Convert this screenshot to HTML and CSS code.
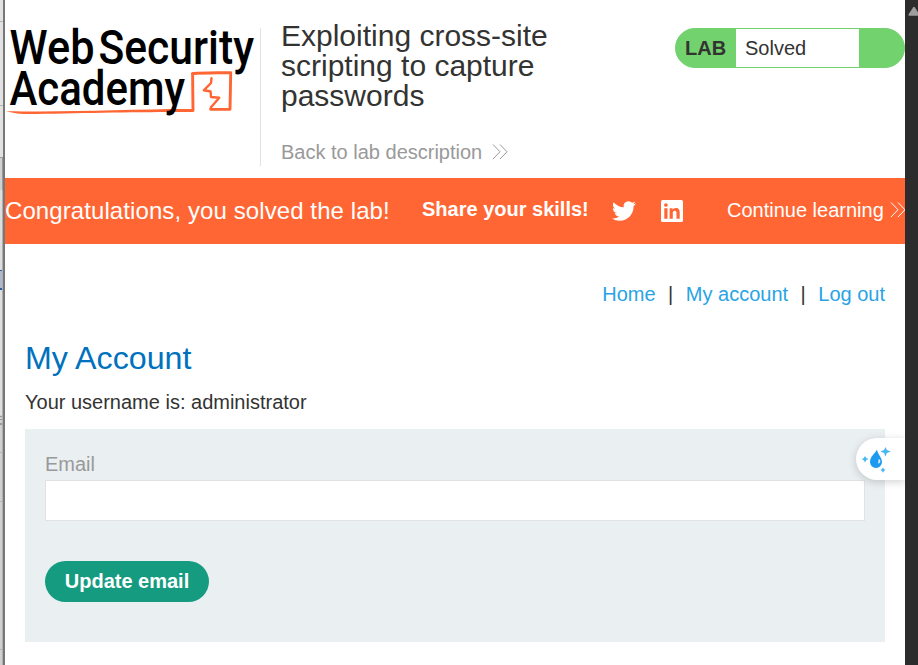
FILE: index.html
```html
<!DOCTYPE html>
<html lang="en">
<head>
<meta charset="utf-8">
<title>Exploiting cross-site scripting to capture passwords</title>
<link rel="stylesheet" href="styles.css">
</head>
<body>
<div class="window">
  <aside class="edge">
    <svg width="5" height="665" viewBox="0 0 5 665" shape-rendering="crispEdges">
      <path fill="#e2e2e2" d="M0 0h3v157H0z"/>
      <path fill="#d0d0d0" d="M0 157h3v508H0z"/>
      <path fill="#dedede" d="M0 190h2v225H0z"/>
      <path fill="#b4b4b4" d="M0 21h3v1H0zM0 105h3v1H0zM0 452h2v1H0zM0 501h2v1H0zM0 649h2v1H0z"/>
      <path fill="#999" d="M0 157h3v1H0zM2 157h1v265H2zM0 416h3v1H0zM0 419h3v1H0zM0 423h3v2H0z"/>
      <path fill="#adb9d1" d="M0 271h2v18H0z"/>
      <path fill="#2c5f9e" d="M0 270h2v1H0zM0 288h2v2H0z"/>
      <path fill="#777" d="M3 0h2v665H3z"/>
      <path fill="#b0aeae" d="M2 190h1v475H2z"/>
    </svg>
  </aside>
  <main class="page">
    <header class="lab-header">
      <a class="logo">
        <svg width="255" height="110" viewBox="5 10 255 110">
          <text class="logo-text" x="9.5" y="64.3" textLength="85" lengthAdjust="spacingAndGlyphs">Web</text>
          <text class="logo-text" x="98.5" y="64.3" textLength="155.5" lengthAdjust="spacingAndGlyphs">Security</text>
          <path fill="#ff6633" d="M6 111C14 111.400 24 111.600 40 111.400C90 111.400 140 108.900 193 109V112C150 111.500 80 113.200 28 114C17 113.800 10 112.600 6 111Z"/>
          <path fill="none" stroke="#ff6633" stroke-width="2.900" stroke-linejoin="round" stroke-linecap="round" d="M193 110.500L192.600 73.500M192.400 73.800C204 72.600 218 73 230.700 72.600L230.400 90L230 109.200L210.800 109.400"/>
          <path fill="none" stroke="#ff6633" stroke-width="2.400" stroke-linejoin="round" stroke-linecap="round" d="M210.800 109V107.500L219.300 97.800L211 97L210.600 91.500L203.800 90.300L211 83L211.500 78.200"/>
          <text class="logo-text" x="9.500" y="105" textLength="175.500" lengthAdjust="spacingAndGlyphs">Academy</text>
        </svg>
      </a>
      <div class="title">
        <h2>Exploiting cross-site<br>scripting to capture<br>passwords</h2>
        <a class="back">Back to lab description
          <svg width="16" height="16" viewBox="0 0 16 16" fill="none" stroke="currentColor"><path d="M1 .5L8 7.750L1 15M8 .5L15 7.750L8 15"/></svg>
        </a>
      </div>
      <div class="status"><span class="status-label">LAB</span><span class="status-text">Solved</span></div>
    </header>
    <section class="banner">
      <h4>Congratulations, you solved the lab!</h4>
      <span class="share">Share your skills!</span>
      <svg class="twitter" width="24" height="24" viewBox="0 0 24 24" fill="#fff"><path d="M23.953 4.570a10 10 0 01-2.825.775 4.958 4.958 0 002.163-2.723c-.951.555-2.005.959-3.127 1.184a4.920 4.920 0 00-8.384 4.482C7.690 8.095 4.067 6.130 1.640 3.162a4.822 4.822 0 00-.666 2.475c0 1.710.870 3.213 2.188 4.096a4.904 4.904 0 01-2.228-.616v.060a4.923 4.923 0 003.946 4.827 4.996 4.996 0 01-2.212.085 4.936 4.936 0 004.604 3.417 9.867 9.867 0 01-6.102 2.105c-.390 0-.779-.023-1.170-.067a13.995 13.995 0 007.557 2.209c9.053 0 13.998-7.496 13.998-13.985 0-.210 0-.420-.015-.630A9.935 9.935 0 0024 4.590z"/></svg>
      <svg class="linkedin" width="22" height="22" viewBox="0 0 22 22"><rect width="22" height="22" rx="1.600" fill="#fff"/><path fill="#ff6633" d="M3.300 8.300h3.200v10.400H3.300zM8.600 8.300h3v1.450c.6-1 1.700-1.700 3.200-1.700 3.200 0 3.900 2.100 3.900 4.900v5.750h-3.200v-5.100c0-1.300-.1-2.800-1.750-2.800s-1.950 1.300-1.950 2.700v5.200H8.600z"/><circle cx="4.900" cy="5" r="1.850" fill="#ff6633"/></svg>
      <a class="continue">Continue learning <svg width="16" height="16" viewBox="0 0 16 16" fill="none" stroke="currentColor"><path d="M1 .5L8 7.750L1 15M8 .5L15 7.750L8 15"/></svg></a>
    </section>
    <div class="content">
      <nav class="links"><a>Home</a><span>|</span><a>My account</a><span>|</span><a>Log out</a></nav>
      <h1>My Account</h1>
      <p>Your username is: administrator</p>
      <form class="login-form">
        <label for="email">Email</label>
        <input id="email" type="email">
        <button type="button">Update email</button>
      </form>
    </div>
    <div class="assistant">
      <svg width="29" height="27" viewBox="0 0 29 27">
        <path fill="#1c9bf0" d="M15 3.500C13 8 8 10 8 16a6 6 0 0012 0C20 11 15.500 8.500 15 3.500z"/>
        <path fill="#49b8f2" d="M23.500 1l1.400 3.100 3.900 1.400-3.900 1.400-1.400 3.600-1.400-3.600-3.800-1.400 3.800-1.400zM3 10l1.200 2 2.300 1.100-2.300 1.100-1.200 2.300-1.200-2.300-2.200-1.100 2.200-1.100zM21 21.500l1 1.600 1.600 1-1.600 1-1 1.600-1-1.600-1.600-1 1.600-1z"/>
        <path fill="#d7effc" d="M16.500 13.500c2-1 3 3.500-.3 4.200z"/>
      </svg>
    </div>
  </main>
  <div class="scrollbar"><svg width="13" height="20" viewBox="0 0 13 20"><path fill="#9f9f9f" d="M3.500 14.500L8 7.500q1-1.500 2 0l4.500 7q.4 1.200-1 1.200h-9q-1.400 0-1-1.200z"/></svg></div>
</div>
</body>
</html>
```
FILE: styles.css
```css
* { box-sizing: border-box; }
body { margin: 0; overflow: hidden; background: #fff; color: #333332; font: 20px/24px "Liberation Sans", Arial, sans-serif; }
h1, h2, h4, p { margin: 0; font-weight: 400; }
svg { display: block; flex: none; }
.window { display: flex; width: 918px; height: 665px; }
.edge { width: 5px; flex: none; }
.page { position: relative; width: 900px; flex: none; overflow: hidden; }
.scrollbar { width: 13px; background: #2c2c2c; overflow: hidden; }

.lab-header { display: flex; height: 178px; align-items: flex-start; }
.logo { width: 256px; height: 138px; margin-top: 28px; border-right: 1px solid #e2e2e2; flex: none; }
.logo svg { margin-top: -18px; overflow: visible; }
.logo-text { font-family: Roboto, sans-serif; font-size: 48.500px; font-weight: 500; fill: #000; }
.title { margin: 21px 0 0 20px; width: 394px; }
.title h2 { font-size: 30px; line-height: 30px; }
.back { display: flex; align-items: center; gap: 10px; margin-top: 29px; color: #999; }
.status { display: flex; width: 230px; height: 40px; margin-top: 28px; border: 1px solid #72d26e; border-radius: 20px; background: #72d26e; line-height: 38px; overflow: hidden; }
.status-label { width: 60px; padding-left: 9px; font-weight: 700; }
.status-text { width: 123px; padding-left: 9px; background: #fff; }

.banner { display: flex; align-items: center; height: 66px; background: #ff6633; color: #fff; white-space: nowrap; }
.banner > * { flex: none; }
.banner h4 { width: 417px; font-size: 24px; letter-spacing: .09px; }
.share { width: 190px; font-weight: 700; padding-bottom: 4px; }
.twitter { margin-right: 25px; }
.linkedin { margin: 0 44px 1px 0; }
.continue { display: flex; align-items: center; gap: 6px; padding-bottom: 2px; }

.content { padding: 38px 20px 0; }
.links { display: flex; justify-content: flex-end; gap: 12.500px; color: #29a3e5; }
.links span { color: #333332; }
.content h1 { margin-top: 34px; color: #0071bd; font-size: 32.200px; line-height: 36px; }
.content p { margin-top: 14px; }
.login-form { display: flex; flex-direction: column; align-items: flex-start; height: 213px; margin-top: 15px; padding: 23px 20px; background: #eaeff2; }
.login-form label { color: #999; }
.login-form input { width: 100%; height: 41px; margin: 4px 0 40px; border: 1px solid #e2e2e2; background: #fff; }
.login-form button { height: 41px; width: 164px; padding: 0 0 2px; border: 0; border-radius: 21px; background: #159b80; color: #fff; font: 700 20px/38px "Liberation Sans", Arial, sans-serif; }

.assistant { position: absolute; top: 438px; right: 0; width: 49px; height: 42px; padding: 8px 0 0 6px; border-radius: 21px 0 0 21px; background: #fff; box-shadow: 0 2px 8px rgba(0, 0, 0, .18); }
```
